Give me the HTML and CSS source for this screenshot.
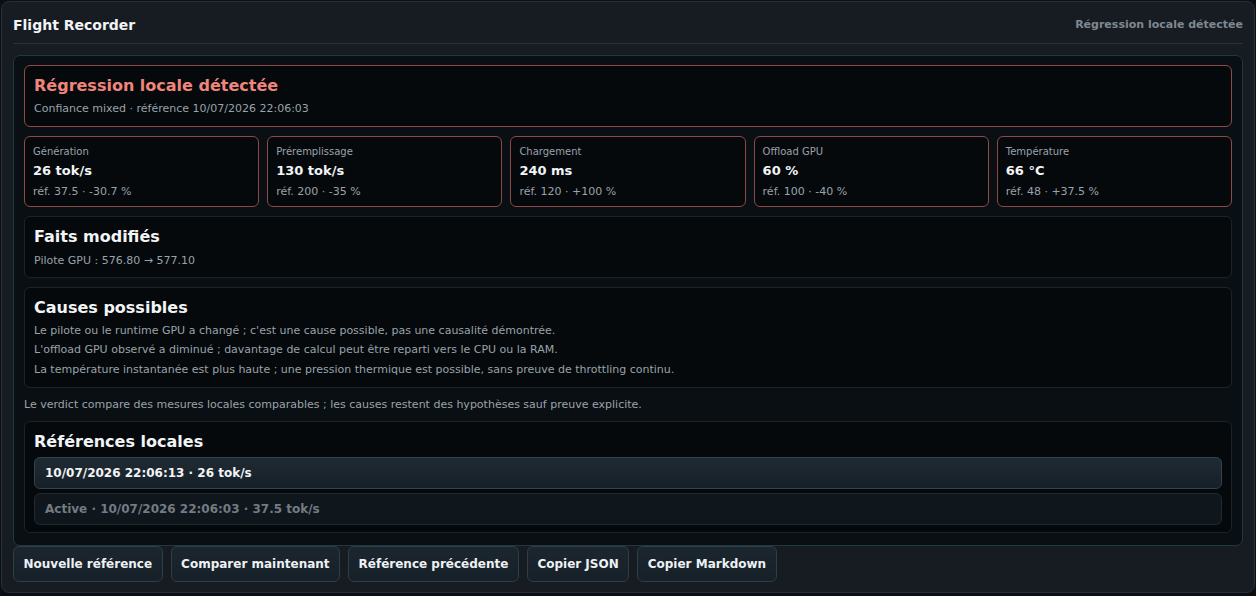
FILE: index.html
```html
<!DOCTYPE html>
<html lang="fr">
<head>
<meta charset="utf-8">
<title>Flight Recorder</title>
<link rel="stylesheet" href="styles.css">
</head>
<body>
<div class="panel">
  <header class="panel-head">
    <h1 class="app-title">Flight Recorder</h1>
    <span class="status">Régression locale détectée</span>
  </header>
  <main class="content">
    <section class="verdict">
      <h2 class="verdict-title">Régression locale détectée</h2>
      <p class="muted">Confiance mixed · référence 10/07/2026 22:06:03</p>
    </section>
    <div class="metrics">
      <div class="metric"><div class="m-label">Génération</div><div class="m-value">26 tok/s</div><div class="m-sub">réf. 37.5 · -30.7 %</div></div>
      <div class="metric"><div class="m-label">Préremplissage</div><div class="m-value">130 tok/s</div><div class="m-sub">réf. 200 · -35 %</div></div>
      <div class="metric"><div class="m-label">Chargement</div><div class="m-value">240 ms</div><div class="m-sub">réf. 120 · +100 %</div></div>
      <div class="metric"><div class="m-label">Offload GPU</div><div class="m-value">60 %</div><div class="m-sub">réf. 100 · -40 %</div></div>
      <div class="metric"><div class="m-label">Température</div><div class="m-value">66 °C</div><div class="m-sub">réf. 48 · +37.5 %</div></div>
    </div>
    <section class="box facts">
      <h3 class="box-title">Faits modifiés</h3>
      <p class="line">Pilote GPU : 576.80 → 577.10</p>
    </section>
    <section class="box">
      <h3 class="box-title">Causes possibles</h3>
      <p class="line">Le pilote ou le runtime GPU a changé ; c'est une cause possible, pas une causalité démontrée.</p>
      <p class="line">L'offload GPU observé a diminué ; davantage de calcul peut être reparti vers le CPU ou la RAM.</p>
      <p class="line">La température instantanée est plus haute ; une pression thermique est possible, sans preuve de throttling continu.</p>
    </section>
    <p class="note">Le verdict compare des mesures locales comparables ; les causes restent des hypothèses sauf preuve explicite.</p>
    <section class="box refs">
      <h3 class="box-title">Références locales</h3>
      <div class="ref ref-current">10/07/2026 22:06:13 · 26 tok/s</div>
      <div class="ref ref-active">Active · 10/07/2026 22:06:03 · 37.5 tok/s</div>
    </section>
  </main>
  <div class="actions">
    <button class="btn">Nouvelle référence</button>
    <button class="btn">Comparer maintenant</button>
    <button class="btn">Référence précédente</button>
    <button class="btn">Copier JSON</button>
    <button class="btn">Copier Markdown</button>
  </div>
</div>
</body>
</html>
```
FILE: styles.css
```css
* { box-sizing: border-box; }
html, body { margin: 0; padding: 0; }
body {
  background: #0b0f13;
  font-family: "DejaVu Sans", sans-serif;
  color: #e6e9ec;
  width: 1256px;
  height: 596px;
  overflow: hidden;
}
.panel {
  margin: 1px 1px 0 1px;
  height: 592px;
  background: #161c22;
  border: 1px solid #262e36;
  border-radius: 8px;
  padding: 0 11px;
}
.panel-head {
  display: flex;
  justify-content: space-between;
  align-items: center;
  height: 42px;
  padding-top: 4px;
  border-bottom: 1px solid #2a3139;
}
.app-title {
  margin: 0;
  font-size: 14px;
  font-weight: bold;
  color: #f2f4f6;
}
.status {
  font-size: 11px;
  font-weight: bold;
  color: #7f8890;
}
.content {
  margin-top: 11px;
  background: #0a0f13;
  border: 1px solid #1e3a3d;
  border-radius: 7px;
  padding: 9px 10px 12px 10px;
  display: flex;
  flex-direction: column;
  gap: 9px;
}
.verdict {
  border: 1px solid #8a4b47;
  border-radius: 6px;
  background: #05090c;
  padding: 9px 9px 10px 9px;
  height: 62px;
}
.verdict-title {
  margin: 0;
  font-size: 16px;
  font-weight: bold;
  color: #f0857b;
  line-height: 21px;
}
.muted {
  margin: 6px 0 0;
  font-size: 11px;
  color: #9aa2aa;
  line-height: 14px;
}
.metrics {
  display: grid;
  grid-template-columns: repeat(5, 1fr);
  gap: 8px;
}
.metric {
  height: 71px;
  border: 1px solid #8a4b47;
  border-radius: 6px;
  background: #05090c;
  padding: 8px 8px 0 8px;
}
.m-label {
  font-size: 10px;
  color: #9aa2aa;
  line-height: 13px;
}
.m-value {
  margin-top: 5px;
  font-size: 13px;
  font-weight: bold;
  color: #f2f4f6;
  line-height: 15px;
}
.m-sub {
  margin-top: 7px;
  font-size: 11px;
  color: #9aa2aa;
  line-height: 13px;
}
.box {
  border: 1px solid #1c242a;
  border-radius: 6px;
  background: #05090c;
  padding: 9px 9px 8px 9px;
}
.facts { padding-bottom: 6px; }
.facts .box-title { margin-bottom: 4px; }
.box-title {
  margin: 0 0 3px;
  font-size: 16px;
  font-weight: bold;
  color: #f2f4f6;
  line-height: 21px;
}
.line {
  margin: 0;
  font-size: 11px;
  color: #9aa2aa;
  line-height: 19.5px;
}
.note {
  margin: 0;
  font-size: 11px;
  color: #9aa2aa;
  line-height: 14px;
  padding: 1px 0 0;
}
.refs { padding-bottom: 7px; }
.ref {
  height: 32px;
  border-radius: 6px;
  font-size: 12px;
  font-weight: bold;
  display: flex;
  align-items: center;
  padding: 0 10px;
}
.ref-current {
  margin-top: 5px;
  background: linear-gradient(#1f2b33, #161f27);
  border: 1px solid #34434d;
  color: #f2f4f6;
}
.ref-active {
  margin-top: 4px;
  background: #0f161c;
  border: 1px solid #1f2930;
  color: #737b83;
}
.actions {
  display: flex;
  gap: 8px;
  margin-top: 0;
}
.btn {
  height: 36px;
  padding: 0 9.5px;
  background: linear-gradient(#1c262e, #162028);
  border: 1px solid #2f3d47;
  border-radius: 6px;
  color: #eef1f4;
  font-family: "DejaVu Sans", sans-serif;
  font-size: 12px;
  font-weight: bold;
}
```
